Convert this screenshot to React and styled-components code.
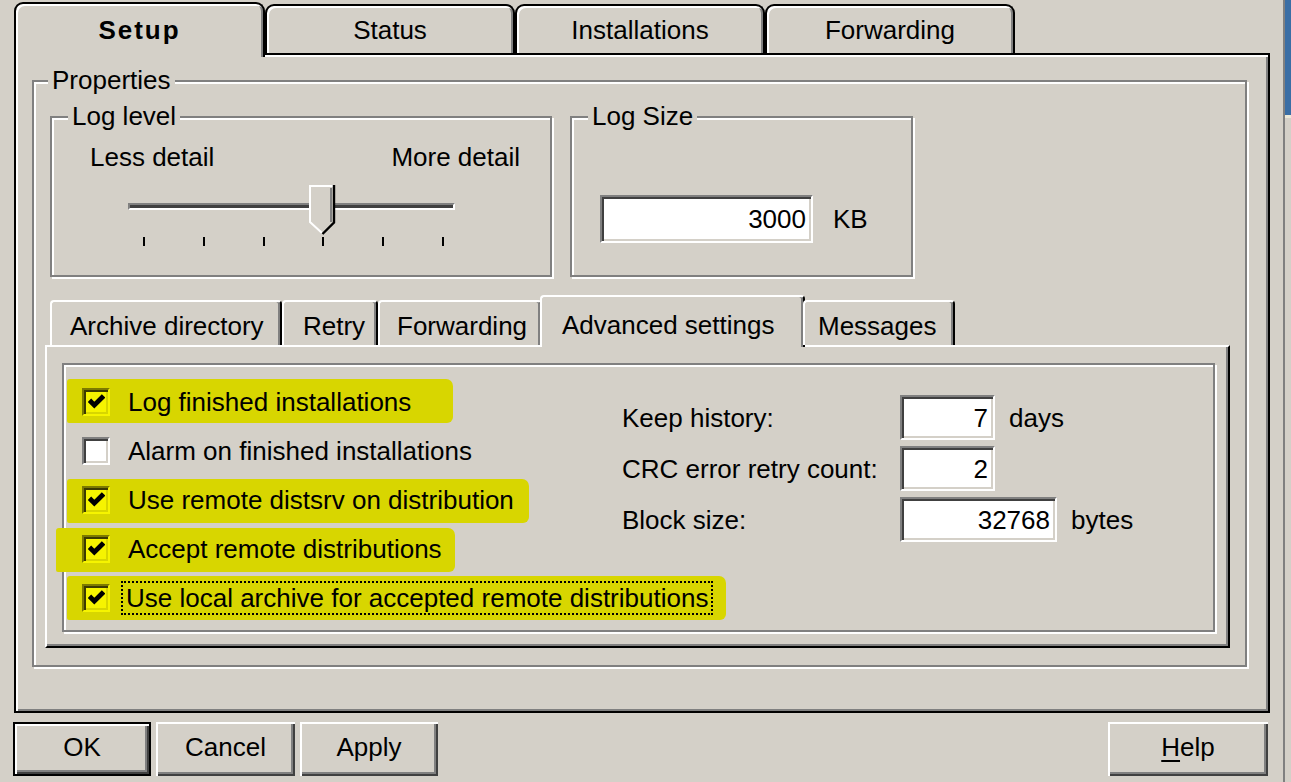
import React from 'react';
import styled, { createGlobalStyle, css } from 'styled-components';

const Global = createGlobalStyle`
  html, body { margin: 0; padding: 0; background: #d4d0c8; }
  body {
    font-family: "Liberation Sans", Arial, sans-serif;
    font-size: 26px;
    color: #000;
  }
  * { box-sizing: border-box; }
`;

const FACE = '#d4d0c8';
const HL = '#d8d600';

const Screen = styled.div`
  width: 1291px;
  height: 782px;
  display: flex;
  background: ${FACE};
  overflow: hidden;
`;

const Dialog = styled.div`
  flex: 1;
  display: flex;
  flex-direction: column;
  padding: 2px 13px 0 14px;
`;

const EdgeStrip = styled.div`
  width: 8px;
  border-left: 2px solid #808080;
  background: linear-gradient(#3a6ea5 0 115px, #ece9d8 115px 118px, ${FACE} 118px);
`;

/* ---------- top tabs ---------- */
const TabStrip = styled.div`
  display: flex;
  align-items: flex-end;
  height: 51px;
  position: relative;
  z-index: 1;
`;

const Tab = styled.div`
  width: ${p => p.$w}px;
  height: ${p => (p.$active ? 55 : 49)}px;
  margin-bottom: ${p => (p.$active ? -4 : 0)}px;
  border: 2px solid #000;
  border-bottom: none;
  border-radius: 9px 9px 0 0;
  background: ${FACE};
  box-shadow: inset 2px 2px 0 #fff, inset -2px 0 0 #808080;
  display: flex;
  justify-content: center;
  padding-top: ${p => (p.$active ? 11 : 9)}px;
  line-height: 30px;
  font-weight: ${p => (p.$active ? 700 : 400)};
  letter-spacing: ${p => (p.$active ? '2px' : '0')};
`;

const Panel = styled.div`
  height: 660px;
  display: flex;
  flex-direction: column;
  border: 2px solid #000;
  box-shadow: inset 2px 2px 0 #fff, inset -2px -2px 0 #808080;
  padding: 25px 21px 44px 16px;
`;

/* ---------- group boxes ---------- */
const Group = styled.div`
  position: relative;
  border: 2px solid #808080;
  box-shadow: 2px 2px 0 #fff, inset 2px 2px 0 #fff;
  ${p => p.$w && css`width: ${p.$w}px;`}
  ${p => p.$h && css`height: ${p.$h}px;`}
`;

const Legend = styled.span`
  position: absolute;
  top: -17px;
  left: ${p => p.$x}px;
  padding: 0 4px;
  line-height: 30px;
  background: ${FACE};
`;

const Properties = styled(Group)`
  flex: 1;
  display: flex;
  flex-direction: column;
  padding: 34px 15px 17px 11px;
`;

const TopRow = styled.div`
  display: flex;
  gap: 18px;
  margin-left: 5px;
`;

const LevelBody = styled.div`
  display: flex;
  flex-direction: column;
  padding: 24px 30px 0 38px;
`;

const DetailLabels = styled.div`
  display: flex;
  justify-content: space-between;
  line-height: 30px;
`;

const Slider = styled.div`
  position: relative;
  width: 327px;
  margin: 13px 0 0 76px;
  display: flex;
  flex-direction: column;
`;

const Track = styled.div`
  margin-top: 18px;
  height: 7px;
  background: #404040;
  border-top: 2px solid #808080;
  border-left: 2px solid #808080;
  border-bottom: 2px solid #fff;
  border-right: 2px solid #fff;
  margin-bottom: 23px;
`;

const Thumb = styled.svg`
  position: absolute;
  left: 181px;
  top: 0;
`;

const Ticks = styled.div`
  display: flex;
  justify-content: space-between;
  padding: 0 11px 0 15px;
  margin-top: 4px;
`;

const Tick = styled.span`
  width: 2px;
  height: 9px;
  background: #000;
`;

const SizeBody = styled.div`
  display: flex;
  align-items: center;
  gap: 20px;
  padding: 77px 0 0 28px;
`;

const Field = styled.div`
  width: ${p => p.$w}px;
  height: ${p => p.$h || 45}px;
  flex: none;
  background: #fff;
  border-top: 2px solid #808080;
  border-left: 2px solid #808080;
  border-right: 2px solid #fff;
  border-bottom: 2px solid #fff;
  box-shadow: inset 2px 2px 0 #404040, inset -2px -2px 0 ${FACE};
  display: flex;
  align-items: center;
  justify-content: flex-end;
  padding-right: 5px;
  line-height: 30px;
`;

/* ---------- inner tabs ---------- */
const InnerTabs = styled.div`
  margin-top: 18px;
  display: flex;
  flex-direction: column;
  flex: 1;
`;

const InnerStrip = styled.div`
  display: flex;
  align-items: flex-end;
  height: 50px;
  padding-left: 5px;
  position: relative;
  z-index: 1;
`;

const InnerTab = styled.div`
  width: ${p => p.$w}px;
  height: ${p => (p.$active ? 52 : 45)}px;
  margin-bottom: ${p => (p.$active ? -2 : 0)}px;
  ${p => p.$active && css`margin-left: -2px; margin-right: -2px;`}
  background: ${FACE};
  border-top: 2px solid #fff;
  border-left: 2px solid #fff;
  border-right: 2px solid #000;
  border-radius: 4px 4px 0 0;
  box-shadow: inset -2px 0 0 #808080;
  padding: ${p => (p.$active ? 13 : 9)}px 0 0 ${p => p.$pl}px;
  line-height: 30px;
  white-space: nowrap;
`;

const InnerPanel = styled.div`
  flex: 1;
  display: flex;
  border-top: 2px solid #fff;
  border-left: 2px solid #fff;
  border-right: 2px solid #000;
  border-bottom: 2px solid #000;
  box-shadow: inset -2px -2px 0 #808080;
  padding: 16px 13px 14px 15px;
`;

const Etched = styled(Group)`
  flex: 1;
  display: flex;
  padding: 12px 0 0 18px;
`;

const Checks = styled.div`
  width: 540px;
  display: flex;
  flex-direction: column;
`;

const Row = styled.div`
  height: 49px;
  display: flex;
  align-items: center;
`;

const Marker = styled.div`
  display: flex;
  align-items: center;
  gap: 18px;
  height: 44px;
  margin-left: -${p => p.$l || 0}px;
  padding: 0 ${p => p.$r || 0}px 0 ${p => p.$l || 0}px;
  margin-top: ${p => p.$dy || 0}px;
  ${p => p.$hl && css`
    background: ${HL};
    border-radius: 3px 7px 6px 2px;
  `}
`;

const CheckBox = styled.span`
  width: 28px;
  height: 28px;
  flex: none;
  display: flex;
  align-items: center;
  justify-content: center;
  margin-top: ${p => -(p.$dy || 0)}px;
  background: ${p => (p.$hl ? '#f6f400' : '#fff')};
  border-top: 2px solid ${p => (p.$hl ? '#7c7a00' : '#808080')};
  border-left: 2px solid ${p => (p.$hl ? '#7c7a00' : '#808080')};
  border-right: 2px solid ${p => (p.$hl ? '#f6f400' : '#fff')};
  border-bottom: 2px solid ${p => (p.$hl ? '#f6f400' : '#fff')};
  box-shadow: inset 2px 2px 0 ${p => (p.$hl ? '#3c3b00' : '#404040')},
    inset -2px -2px 0 ${p => (p.$hl ? HL : FACE)};
`;

const Label = styled.span`
  line-height: 30px;
  white-space: nowrap;
  margin-top: ${p => -(p.$dy || 0)}px;
  ${p => p.$focus && css`
    outline: 2px dotted #000;
    outline-offset: 0;
    padding: 0 3px;
    margin-left: -5px;
  `}
`;

const Settings = styled.div`
  margin-top: 18px;
  display: grid;
  grid-template-columns: 278px auto;
  grid-auto-rows: 45px;
  row-gap: 6px;
  align-items: center;
  align-self: flex-start;
`;

const Entry = styled.div`
  display: flex;
  align-items: center;
  gap: 14px;
`;

const Text = styled.span`
  line-height: 30px;
  white-space: nowrap;
`;

/* ---------- buttons ---------- */
const Buttons = styled.div`
  margin-top: 9px;
  display: flex;
  gap: 5px;
  height: 54px;
  margin-left: -1px;
  margin-right: 2px;
`;

const Button = styled.button`
  width: ${p => p.$w}px;
  height: 54px;
  font: inherit;
  color: #000;
  background: ${FACE};
  border: ${p => (p.$default ? '2px solid #000' : 'none')};
  box-shadow: inset 2px 2px 0 #fff, inset -2px -2px 0 #404040, inset -4px -4px 0 #808080;
  padding: 0 0 3px;
  ${p => p.$push && css`margin-left: auto;`}
`;

const Mnemonic = styled.span`
  text-decoration: underline;
  text-underline-offset: 4px;
`;

const Check = () => (
  <svg width="17" height="17" viewBox="0 0 7 7">
    <polyline points="0.6,3 2.6,5 6.4,1.2" fill="none" stroke="#000" strokeWidth="2" />
  </svg>
);

const checks = [
  { text: 'Log finished installations', on: true, hl: true, l: 15, r: 42, dy: -2 },
  { text: 'Alarm on finished installations', on: false, hl: false },
  { text: 'Use remote distsrv on distribution', on: true, hl: true, l: 15, r: 15, dy: 2 },
  { text: 'Accept remote distributions', on: true, hl: true, l: 26, r: 13, dy: 2 },
  { text: 'Use local archive for accepted remote distributions', on: true, hl: true, l: 15, r: 15, dy: 0, focus: true },
];

const settings = [
  { label: 'Keep history:', value: '7', w: 95, unit: 'days' },
  { label: 'CRC error retry count:', value: '2', w: 95 },
  { label: 'Block size:', value: '32768', w: 157, unit: 'bytes' },
];

export default function App() {
  return (
    <>
      <Global />
      <Screen>
        <Dialog>
          <TabStrip>
            <Tab $w={251} $active>Setup</Tab>
            <Tab $w={250}>Status</Tab>
            <Tab $w={250}>Installations</Tab>
            <Tab $w={250}>Forwarding</Tab>
          </TabStrip>
          <Panel>
            <Properties>
              <Legend $x={14}>Properties</Legend>
              <TopRow>
                <Group $w={502} $h={161}>
                  <Legend $x={16}>Log level</Legend>
                  <LevelBody>
                    <DetailLabels>
                      <span>Less detail</span>
                      <span>More detail</span>
                    </DetailLabels>
                  </LevelBody>
                  <Slider>
                    <Track />
                    <Thumb width="27" height="50" viewBox="0 0 27 50">
                      <polygon points="1,1 25,1 25,37 13,49 1,37" fill={FACE} />
                      <polyline points="13,48 1,37 1,1 24,1" fill="none" stroke="#fff" strokeWidth="2" />
                      <polyline points="22,3 22,37" fill="none" stroke="#808080" strokeWidth="2" />
                      <polyline points="25,0 25,37.5 13.5,49" fill="none" stroke="#000" strokeWidth="2.4" />
                    </Thumb>
                    <Ticks>
                      {[0, 1, 2, 3, 4, 5].map(i => <Tick key={i} />)}
                    </Ticks>
                  </Slider>
                </Group>
                <Group $w={343} $h={161}>
                  <Legend $x={16}>Log Size</Legend>
                  <SizeBody>
                    <Field $w={213} $h={48}>3000</Field>
                    <Text>KB</Text>
                  </SizeBody>
                </Group>
              </TopRow>

              <InnerTabs>
                <InnerStrip>
                  <InnerTab $w={232} $pl={18}>Archive directory</InnerTab>
                  <InnerTab $w={96} $pl={19}>Retry</InnerTab>
                  <InnerTab $w={164} $pl={17}>Forwarding</InnerTab>
                  <InnerTab $w={265} $pl={20} $active>Advanced settings</InnerTab>
                  <InnerTab $w={152} $pl={13}>Messages</InnerTab>
                </InnerStrip>
                <InnerPanel>
                  <Etched>
                    <Checks>
                      {checks.map(c => (
                        <Row key={c.text}>
                          <Marker $hl={c.hl} $l={c.l} $r={c.r} $dy={c.dy}>
                            <CheckBox $hl={c.hl} $dy={c.dy}>{c.on && <Check />}</CheckBox>
                            <Label $dy={c.dy} $focus={c.focus}>{c.text}</Label>
                          </Marker>
                        </Row>
                      ))}
                    </Checks>
                    <Settings>
                      {settings.map(s => (
                        <React.Fragment key={s.label}>
                          <Text>{s.label}</Text>
                          <Entry>
                            <Field $w={s.w}>{s.value}</Field>
                            {s.unit && <Text>{s.unit}</Text>}
                          </Entry>
                        </React.Fragment>
                      ))}
                    </Settings>
                  </Etched>
                </InnerPanel>
              </InnerTabs>
            </Properties>
          </Panel>
          <Buttons>
            <Button $w={138} $default>OK</Button>
            <Button $w={139}>Cancel</Button>
            <Button $w={138}>Apply</Button>
            <Button $w={160} $push><Mnemonic>H</Mnemonic>elp</Button>
          </Buttons>
        </Dialog>
        <EdgeStrip />
      </Screen>
    </>
  );
}
